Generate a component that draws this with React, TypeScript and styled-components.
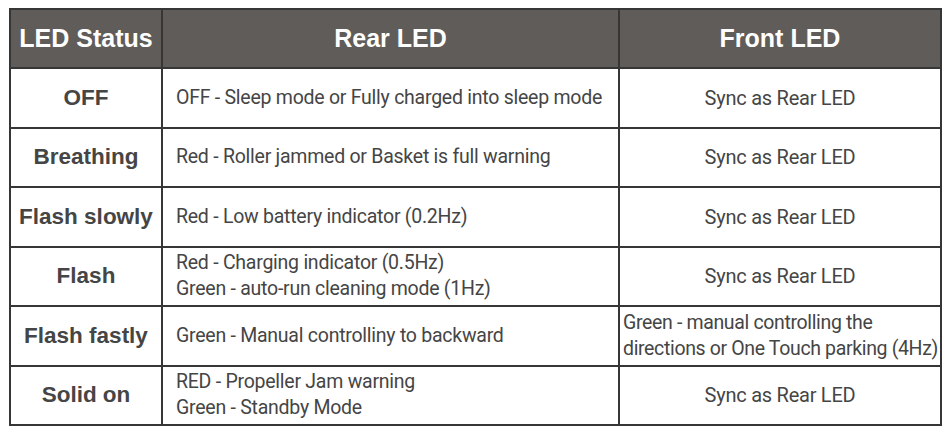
import styled, { createGlobalStyle } from 'styled-components';

type Row = {
  status: string;
  rear: string[];
  front: string[];
  frontLeft?: boolean;
};

const rows: Row[] = [
  { status: 'OFF', rear: ['OFF - Sleep mode or Fully charged into sleep mode'], front: ['Sync as Rear LED'] },
  { status: 'Breathing', rear: ['Red - Roller jammed or Basket is full warning'], front: ['Sync as Rear LED'] },
  { status: 'Flash slowly', rear: ['Red - Low battery indicator (0.2Hz)'], front: ['Sync as Rear LED'] },
  {
    status: 'Flash',
    rear: ['Red - Charging indicator (0.5Hz)', 'Green - auto-run cleaning mode (1Hz)'],
    front: ['Sync as Rear LED'],
  },
  {
    status: 'Flash fastly',
    rear: ['Green - Manual controlliny to backward'],
    front: ['Green - manual controlling the', 'directions or One Touch parking (4Hz)'],
    frontLeft: true,
  },
  {
    status: 'Solid on',
    rear: ['RED - Propeller Jam warning', 'Green - Standby Mode'],
    front: ['Sync as Rear LED'],
  },
];

export default function App() {
  return (
    <>
      <GlobalStyle />
      <Page>
        <Table>
          <colgroup>
            <col style={{ width: 152 }} />
            <col style={{ width: 457 }} />
            <col style={{ width: 322 }} />
          </colgroup>
          <thead>
            <tr>
              <HeadCell>LED Status</HeadCell>
              <HeadCell>Rear LED</HeadCell>
              <HeadCell>Front LED</HeadCell>
            </tr>
          </thead>
          <tbody>
            {rows.map((r) => (
              <tr key={r.status}>
                <StatusCell>{r.status}</StatusCell>
                <TextCell>
                  {r.rear.map((l) => (
                    <Line key={l}>{l}</Line>
                  ))}
                </TextCell>
                <TextCell $center={!r.frontLeft} $tight={r.frontLeft}>
                  {r.front.map((l) => (
                    <Line key={l}>{l}</Line>
                  ))}
                </TextCell>
              </tr>
            ))}
          </tbody>
        </Table>
      </Page>
    </>
  );
}

const GlobalStyle = createGlobalStyle`
  html, body {
    margin: 0;
    padding: 0;
    background: #fff;
  }
`;

const Page = styled.div`
  padding: 8px 0 0 9px;
`;

const Table = styled.table`
  border-collapse: collapse;
  table-layout: fixed;
  width: 931px;
  color: #424242;
`;

const HeadCell = styled.th`
  height: 57px;
  padding: 0;
  background: #5f5c59;
  color: #fff;
  border: 2px solid #363636;
  font-family: 'Liberation Sans', Arial, sans-serif;
  font-weight: 700;
  font-size: 25px;
  text-align: center;
  vertical-align: middle;
`;

const StatusCell = styled.td`
  height: 57.5px;
  padding: 0;
  border: 2px solid #363636;
  font-family: 'Liberation Sans', Arial, sans-serif;
  font-weight: 700;
  font-size: 22.5px;
  color: #454545;
  text-align: center;
  vertical-align: middle;
`;

const TextCell = styled.td<{ $center?: boolean; $tight?: boolean }>`
  height: 57.5px;
  padding: 0 0 0 ${(p) => (p.$center ? '0' : p.$tight ? '3px' : '13px')};
  border: 2px solid #363636;
  font-family: Roboto, 'Liberation Sans', sans-serif;
  font-size: ${(p) => (p.$center ? '20px' : '19.5px')};
  letter-spacing: ${(p) => (p.$tight ? '-0.35px' : '-0.25px')};
  line-height: 26px;
  color: #454545;
  text-align: ${(p) => (p.$center ? 'center' : 'left')};
  vertical-align: middle;
`;

const Line = styled.div`
  white-space: nowrap;
`;
